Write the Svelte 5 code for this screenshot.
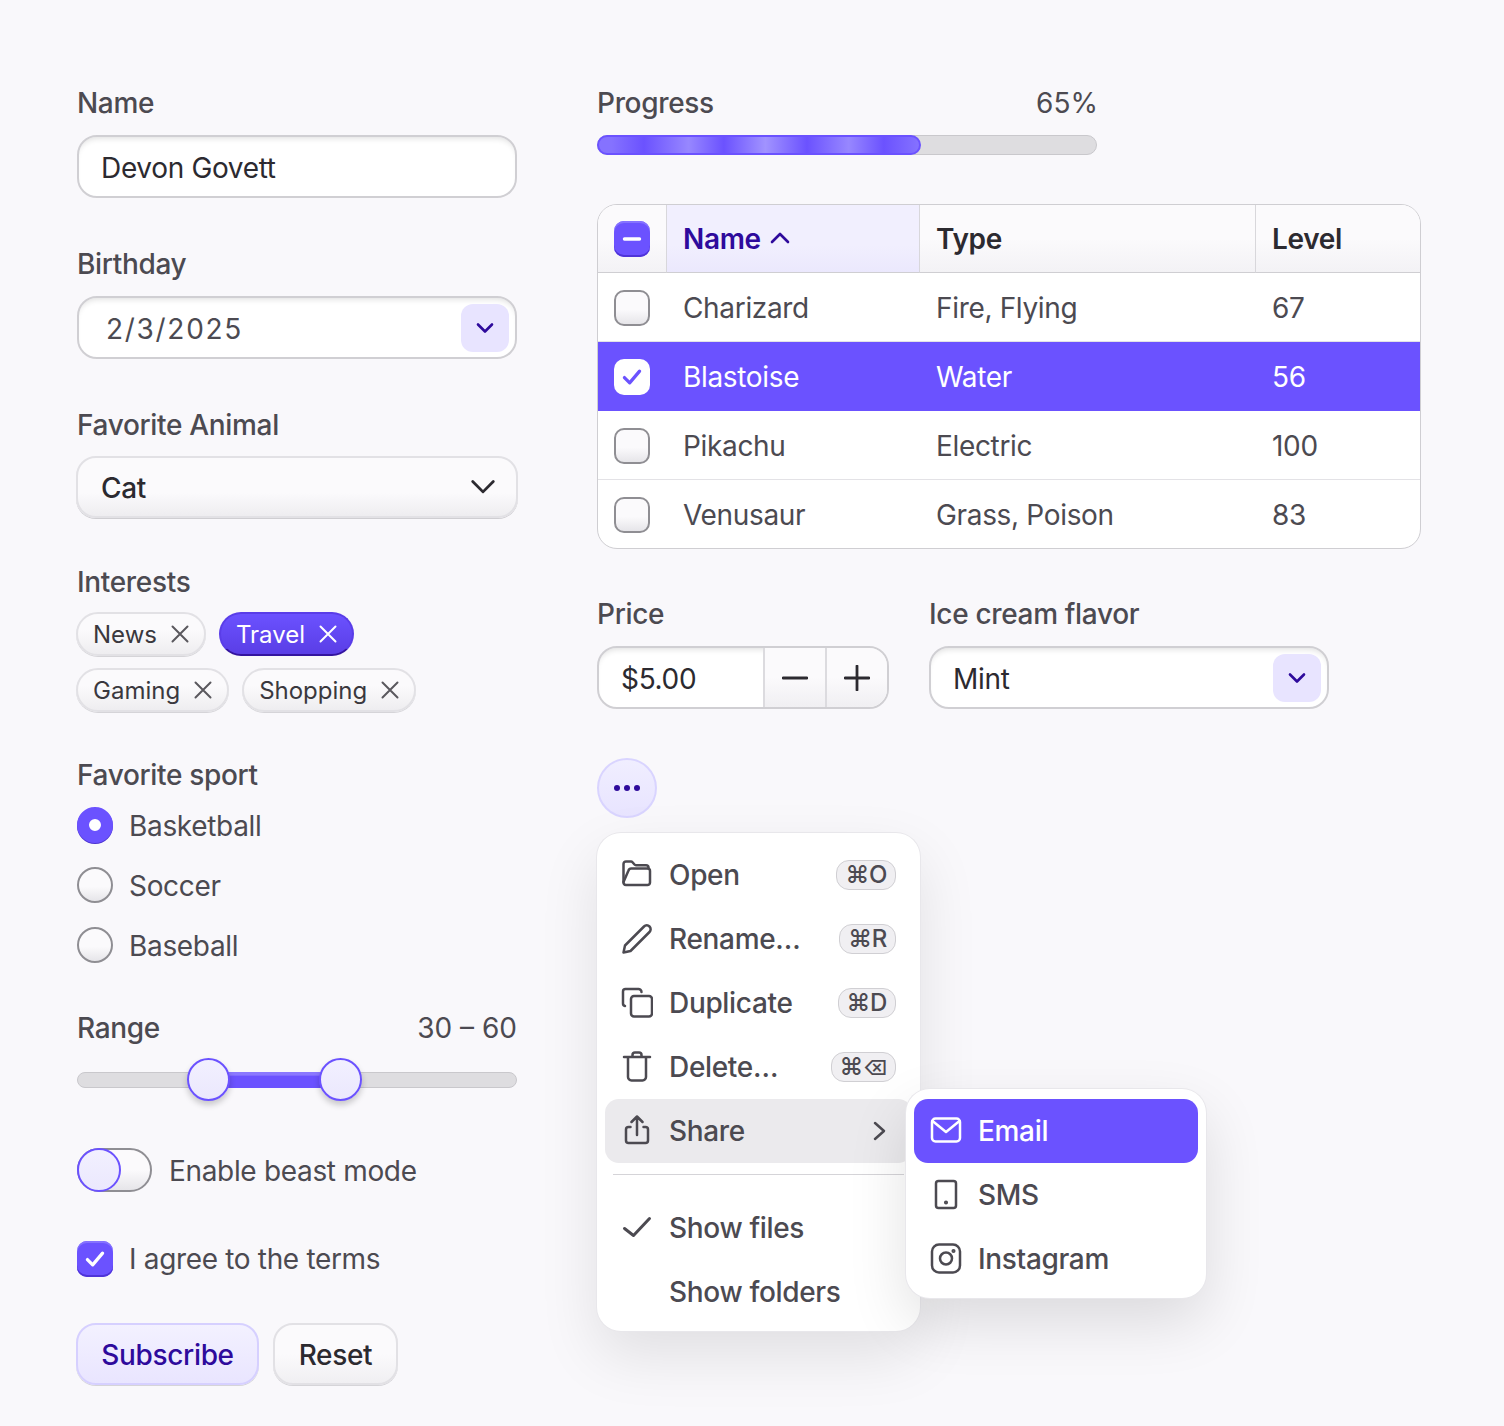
<script>
  const tags = [
    [{ name: "News" }, { name: "Travel", on: true }],
    [{ name: "Gaming" }, { name: "Shopping" }],
  ];
  const sports = ["Basketball", "Soccer", "Baseball"];
  const pokemon = [
    { name: "Charizard", type: "Fire, Flying", level: 67 },
    { name: "Blastoise", type: "Water", level: 56, on: true },
    { name: "Pikachu", type: "Electric", level: 100 },
    { name: "Venusaur", type: "Grass, Poison", level: 83 },
  ];
  const range = [30, 60];
  const progress = 65;
</script>

{#snippet chevron()}
  <svg class="chev" viewBox="0 0 24 24"><path d="M5 8.5l7 7 7-7" /></svg>
{/snippet}

{#snippet check()}
  <svg viewBox="0 0 24 24"><path d="M5.5 12.5l4.5 4.5 8.5-10" /></svg>
{/snippet}

<div class="page">
  <div class="col">
    <div class="label">Name</div>
    <div class="field"><span class="t">Devon Govett</span></div>

    <div class="label next">Birthday</div>
    <div class="field picker">
      <span class="date t">2/3/2025</span>
      <span class="drop">{@render chevron()}</span>
    </div>

    <div class="label next">Favorite Animal</div>
    <div class="select"><span class="t">Cat</span> <svg class="chev dark" viewBox="0 0 24 24"><path d="M2.500 7l9.500 9.500L21.500 7" /></svg></div>

    <div class="label interests">Interests</div>
    <div class="tags">
      {#each tags as row}
        <div class="tag-row">
          {#each row as t}
            <span class="tag" class:on={t.on}>
              {t.name}
              <svg viewBox="0 0 18 18"><path d="M1.5 1.5l15 15M16.5 1.5l-15 15" /></svg>
            </span>
          {/each}
        </div>
      {/each}
    </div>

    <div class="label sport">Favorite sport</div>
    <div class="radios">
      {#each sports as s, i}
        <div class="radio-row"><span class="radio" class:on={i === 0}></span><span class="t">{s}</span></div>
      {/each}
    </div>

    <div class="label-row range-label">
      <span class="label">Range</span>
      <span class="value">30 – 60</span>
    </div>
    <div class="slider">
      <div class="track">
        <div class="fill" style="left:{range[0]}%;width:{range[1] - range[0]}%"></div>
      </div>
      {#each range as v}
        <span class="thumb" style="left:{v}%"></span>
      {/each}
    </div>

    <div class="switch-row">
      <span class="switch"><span class="knob"></span></span>
      <span class="t">Enable beast mode</span>
    </div>

    <div class="check-row">
      <span class="box on">{@render check()}</span>
      I agree to the terms
    </div>

    <div class="actions">
      <button class="btn primary">Subscribe</button>
      <button class="btn">Reset</button>
    </div>
  </div>

  <div class="col right">
    <div class="label-row progress-row">
      <span class="label">Progress</span>
      <span class="value">{progress}%</span>
    </div>
    <div class="progress"><div class="bar" style="width:{progress}%"></div></div>

    <div class="table-wrap">
      <table>
        <thead>
          <tr>
            <th class="c0"><span class="box on">
              <svg viewBox="0 0 24 24"><path d="M5.5 12h13" /></svg>
            </span></th>
            <th class="c1 sorted">Name <svg viewBox="0 0 24 24"><path d="M4 16l8-8 8 8" /></svg></th>
            <th class="c2">Type</th>
            <th>Level</th>
          </tr>
        </thead>
        <tbody>
          {#each pokemon as p}
            <tr class:on={p.on}>
              <td><span class="box" class:inv={p.on}>{#if p.on}{@render check()}{/if}</span></td>
              <td><span class="t">{p.name}</span></td>
              <td><span class="t">{p.type}</span></td>
              <td><span class="t">{p.level}</span></td>
            </tr>
          {/each}
        </tbody>
      </table>
    </div>

    <div class="form-row">
      <div>
        <div class="label">Price</div>
        <div class="number">
          <span class="num-val">$5.00</span>
          <span class="step"><svg viewBox="0 0 26 26"><path d="M1 13h24" /></svg></span>
          <span class="step"><svg viewBox="0 0 26 26"><path d="M1 13h24M13 1v24" /></svg></span>
        </div>
      </div>
      <div>
        <div class="label">Ice cream flavor</div>
        <div class="field picker flavor">
          <span class="t">Mint</span>
          <span class="drop">{@render chevron()}</span>
        </div>
      </div>
    </div>

    <button class="more" aria-label="More">
      <svg viewBox="0 0 28 8"><circle cx="4" cy="4" r="3" /><circle cx="14" cy="4" r="3" /><circle cx="24" cy="4" r="3" /></svg>
    </button>

    <div class="menu">
      <div class="item">
        <svg class="ic" viewBox="0 0 32 32"><path d="M2.500 23V5A2.500 2.500 0 0 1 5 2.500h5a2 2 0 0 1 1.500.7l2 2.300a2 2 0 0 0 1.500.7h10a2.500 2.500 0 0 1 2.500 2.500V9.500" /><path d="M2.500 23a2.500 2.500 0 0 0 2.500 3h21.500a2.500 2.500 0 0 0 2.500-2.500V12a2.500 2.500 0 0 0-2.500-2.500H10.500a3 3 0 0 0-3 2z" /></svg>
        <span class="text">Open</span><kbd>⌘O</kbd>
      </div>
      <div class="item">
        <svg class="ic" viewBox="0 0 32 32"><path d="M2.500 29.500l1.500-7L23 3.500a3.500 3.500 0 0 1 5.500 5.500L9.500 28z" /></svg>
        <span class="text">Rename…</span><kbd>⌘R</kbd>
      </div>
      <div class="item">
        <svg class="ic" viewBox="0 0 32 32"><rect x="10" y="9" width="21" height="20.500" rx="3" /><path d="M4 19a2.500 2.500 0 0 1-2-2.500V4.500A2.500 2.500 0 0 1 4.500 2H17a3 3 0 0 1 3.500 3" /></svg>
        <span class="text">Duplicate</span><kbd>⌘D</kbd>
      </div>
      <div class="item">
        <svg class="ic" viewBox="0 0 32 32"><path d="M3 6h26M7 6v20a3.500 3.500 0 0 0 3.500 3.500h11A3.500 3.500 0 0 0 25 26V6M11.500 6V4a2.500 2.500 0 0 1 2.500-2.500h4A2.500 2.500 0 0 1 20.500 4v2" /></svg>
        <span class="text">Delete…</span><kbd>⌘<span class="bs">⌫</span></kbd>
      </div>
      <div class="item active">
        <svg class="ic" viewBox="0 0 32 32"><path d="M16 20V1.500M10.500 7L16 1.500 21.500 7M9.500 12H7.500A2.500 2.500 0 0 0 5 14.500V25.500A2.500 2.500 0 0 0 7.500 28h17a2.500 2.500 0 0 0 2.500-2.500V14.500A2.500 2.500 0 0 0 24.500 12H22.500" /></svg>
        <span class="text">Share</span>
        <svg class="arrow" viewBox="0 0 14 20"><path d="M2 2l9 8-9 8" /></svg>
      </div>
      <div class="sep"></div>
      <div class="item">
        <svg class="ic heavy" viewBox="0 0 32 32"><path d="M3.500 16.500l9 7L28.500 6.500" /></svg>
        <span class="text">Show files</span>
      </div>
      <div class="item">
        <span class="ic"></span>
        <span class="text">Show folders</span>
      </div>

      <div class="submenu">
        <div class="item hi">
          <svg class="ic" viewBox="0 0 32 32"><rect x="2" y="3.500" width="28" height="23" rx="3.500" /><path d="M2.500 6l13.500 11L29.500 6" /></svg>
          <span class="text">Email</span>
        </div>
        <div class="item">
          <svg class="ic" viewBox="0 0 32 32"><rect x="6" y="2" width="20" height="27" rx="2.500" /><circle class="dot" cx="16" cy="23.500" r="0.800" /></svg>
          <span class="text">SMS</span>
        </div>
        <div class="item">
          <svg class="ic" viewBox="0 0 32 32"><rect x="2" y="1.500" width="28" height="28" rx="7" /><circle cx="16" cy="15.500" r="6" /><circle class="dot" cx="23.500" cy="8" r="0.800" /></svg>
          <span class="text">Instagram</span>
        </div>
      </div>
    </div>
  </div>
</div>

<style>
  :global(body) {
    background: #f9f8fb;
    font-family: Inter, "Liberation Sans", sans-serif;
    font-size: 28px;
    letter-spacing: -0.33px;
    color: #2c2a30;
  }
  svg {
    fill: none;
    stroke: currentColor;
    stroke-linecap: round;
    stroke-linejoin: round;
  }
  .t { padding-top: 2px; }
  .page {
    display: grid;
    grid-template-columns: 440px 824px;
    gap: 80px;
    padding: 86px 0 0 77px;
    min-height: 1340px;
  }
  .col {
    display: flex;
    flex-direction: column;
    min-width: 0;
  }
  .label {
    height: 34px;
    line-height: 34px;
    font-weight: 500;
    color: #4c4a51;
    margin-bottom: 15px;
  }
  .label.next { margin-top: 49px; }
  .label-row {
    display: flex;
    justify-content: space-between;
    height: 34px;
  }
  .label-row .label { margin: 0; }
  .value {
    line-height: 34px;
    color: #4c4a51;
    letter-spacing: 0;
  }

  .field {
    height: 63px;
    box-sizing: border-box;
    border: 2px solid #d0cfd3;
    border-radius: 20px;
    background: #fff;
    box-shadow: inset 0 5px 6px -4px rgba(0, 0, 0, 0.14);
    padding: 0 22px;
    display: flex;
    align-items: center;
    justify-content: space-between;
  }
  .picker { padding-right: 6px; }
  .date {
    color: #4c4a51;
    padding-left: 5px;
    letter-spacing: 1.7px;
  }
  .drop {
    width: 48px;
    height: 48px;
    border-radius: 12px;
    background: #e8e4ff;
    color: #2e0a9c;
    display: flex;
    align-items: center;
    justify-content: center;
  }
  .chev {
    width: 24px;
    height: 24px;
    stroke-width: 2.6;
  }
  .select {
    margin: -1px -1px 0 -1px;
    height: 62px;
    box-sizing: border-box;
    border: 2px solid #e2e1e5;
    border-radius: 20px;
    background: linear-gradient(#fbfafc 60%, #eeedf0);
    box-shadow: 0 1px 0 #cfced2;
    padding: 0 20px 0 23px;
    display: flex;
    align-items: center;
    justify-content: space-between;
    font-weight: 500;
  }
  .dark { width: 26px; height: 26px; }

  .interests { margin: 47px 0 13px; }
  .tags {
    display: flex;
    flex-direction: column;
    gap: 12px;
    margin-left: -1px;
  }
  .tag-row {
    display: flex;
    gap: 13px;
  }
  .tag {
    height: 44px;
    box-sizing: border-box;
    border: 2px solid #e2e1e5;
    border-radius: 22px;
    background: linear-gradient(#fbfafc 40%, #eeedf0);
    box-shadow: 0 1px 0 #d5d4d8;
    padding: 0 15px;
    display: flex;
    align-items: center;
    gap: 14px;
    font-size: 24px;
    letter-spacing: 0;
    color: #3a383e;
  }
  .tag svg {
    width: 18px;
    height: 18px;
    stroke-width: 2;
    color: #5a585e;
  }
  .tag.on {
    border-color: #5a3de8 #5a3de8 #34149f;
    background: linear-gradient(#6b52ff, #5a3ee6);
    color: #fff;
    box-shadow: none;
  }
  .tag.on svg { color: #fff; }

  .sport { margin: 46px 0 3px; }
  .radio-row {
    height: 60px;
    display: flex;
    align-items: center;
    gap: 16px;
    color: #4c4a51;
  }
  .radio {
    width: 36px;
    height: 36px;
    box-sizing: border-box;
    border: 2px solid #8f8e93;
    border-radius: 50%;
    background: linear-gradient(#fbfafc 55%, #e6e5e9);
  }
  .radio.on {
    border: 12px solid #6b52ff;
    background: #fff;
    box-shadow: 0 1px 0 #4a30d0;
  }

  .range-label { margin-top: 36px; }
  .slider {
    position: relative;
    height: 42px;
    margin-top: 14px;
    display: flex;
    align-items: center;
  }
  .track {
    position: relative;
    width: 100%;
    height: 16px;
    box-sizing: border-box;
    border: 1px solid #c9c8cc;
    border-radius: 8px;
    background: #dedde0;
  }
  .fill {
    position: absolute;
    top: -1px;
    bottom: -1px;
    background: linear-gradient(#8b78ff 20%, #6b52ff 25%);
  }
  .thumb {
    position: absolute;
    top: -1px;
    width: 43px;
    height: 43px;
    margin-left: -22px;
    box-sizing: border-box;
    border: 2px solid #6b52ff;
    border-radius: 50%;
    background: linear-gradient(#f2f0ff, #ebe8fd);
    box-shadow: 0 4px 6px rgba(0, 0, 0, 0.2);
  }

  .switch-row {
    margin-top: 47px;
    display: flex;
    align-items: center;
    gap: 17px;
    color: #4c4a51;
  }
  .switch {
    width: 75px;
    height: 44px;
    box-sizing: border-box;
    border: 2px solid #8f8e93;
    border-radius: 22px;
    background: linear-gradient(#fbfafc 50%, #e6e5e9);
    display: flex;
    align-items: center;
  }
  .knob {
    margin-left: -2px;
    width: 44px;
    height: 44px;
    box-sizing: border-box;
    border: 2px solid #6b52ff;
    border-radius: 50%;
    background: linear-gradient(#f2f0ff, #ebe8fd);
  }

  .check-row {
    margin-top: 49px;
    height: 36px;
    display: flex;
    align-items: center;
    gap: 16px;
    color: #4c4a51;
  }
  .box {
    width: 36px;
    height: 36px;
    box-sizing: border-box;
    border: 2px solid #8f8e93;
    border-radius: 10px;
    background: linear-gradient(#fbfafc 55%, #e6e5e9);
    display: inline-flex;
    align-items: center;
    justify-content: center;
    vertical-align: middle;
  }
  .box svg {
    width: 28px;
    height: 28px;
    stroke-width: 2.8;
  }
  .box.on {
    border: 0;
    background: #6b52ff;
    color: #fff;
    box-shadow: inset 0 2px 0 #8572ff, inset 0 -2px 0 #4f34d8;
  }
  .box.inv {
    border: 0;
    background: #fff;
    color: #6b52ff;
  }

  .actions {
    margin: 46px 0 0 -1px;
    display: flex;
    gap: 14px;
  }
  .btn {
    width: 183px;
    height: 62px;
    box-sizing: border-box;
    border: 2px solid #e2e1e5;
    border-radius: 20px;
    background: linear-gradient(#fbfafc 50%, #f0eff2);
    box-shadow: 0 1px 0 #d5d4d8;
    padding: 2px 0 0;
    font: 500 28px Inter, "Liberation Sans", sans-serif;
    letter-spacing: inherit;
    color: #2c2a30;
  }
  .btn:not(.primary) { width: 125px; }
  .btn.primary {
    border-color: #d6d0ff;
    background: linear-gradient(#f3f1ff, #e9e5ff);
    color: #2e0a9c;
  }

  .progress-row { margin-bottom: 15px; width: 501px; }
  .progress {
    width: 500px;
    height: 20px;
    box-sizing: border-box;
    border: 1px solid #c9c8cc;
    border-radius: 10px;
    background: #dedde0;
  }
  .bar {
    height: 20px;
    margin: -1px;
    box-sizing: border-box;
    border: 2px solid #6b52ff;
    border-radius: 10px;
    background: linear-gradient(90deg, #8572ff 4%, #6b52ff 14%, #9787ff 28%, #6b52ff 39%, #a193ff 52%, #6b52ff 65%, #9787ff 78%, #6b52ff 89%, #8572ff);
  }

  .table-wrap {
    margin-top: 49px;
    border: 1px solid #cfced2;
    border-radius: 20px;
    overflow: hidden;
    background: #fff;
  }
  table {
    width: 100%;
    border-collapse: separate;
    border-spacing: 0;
    table-layout: fixed;
  }
  th {
    height: 67px;
    padding: 0 0 0 16px;
    text-align: left;
    font-weight: 600;
    border-bottom: 1px solid #cfced2;
    background: linear-gradient(#fbfafc 50%, #f3f2f5);
    box-sizing: content-box;
  }
  th.c0 { width: 52px; border-right: 1px solid #d8d7db; }
  th.c1 { width: 236px; border-right: 1px solid #d8d7db; }
  th.c2 { width: 319px; border-right: 1px solid #d8d7db; }
  th.sorted {
    background: linear-gradient(#f1effe 60%, #ebe8fd);
    color: #2e0a9c;
  }
  th.sorted svg {
    width: 24px;
    height: 24px;
    stroke-width: 2.6;
    vertical-align: -1px;
  }
  td {
    height: 68px;
    padding: 0 0 0 16px;
    border-bottom: 1px solid #e3e2e6;
    color: #4c4a51;
  }
  td .t {
    position: relative;
    top: 1px;
    padding: 0;
  }
  tr:last-child td {
    border-bottom: 0;
  }
  tr.on td {
    background: #6b52ff;
    color: #fff;
    border-bottom-color: #6b52ff;
  }

  .form-row {
    margin-top: 48px;
    display: flex;
    gap: 40px;
  }
  .number {
    width: 292px;
    height: 63px;
    box-sizing: border-box;
    border: 2px solid #d0cfd3;
    border-radius: 20px;
    background: #fff;
    box-shadow: inset 0 5px 6px -4px rgba(0, 0, 0, 0.14);
    display: flex;
    overflow: hidden;
  }
  .num-val {
    width: 165px;
    padding: 3px 0 0 22px;
    box-sizing: border-box;
    line-height: 56px;
  }
  .step {
    width: 62px;
    border-left: 2px solid #dcdbdf;
    box-sizing: border-box;
    background: linear-gradient(#fbfafc 50%, #f0eff2);
    display: flex;
    align-items: center;
    justify-content: center;
  }
  .step svg {
    width: 26px;
    height: 26px;
    stroke-width: 2.8;
  }
  .flavor {
    width: 400px;
  }

  .more {
    margin-top: 49px;
    width: 60px;
    height: 60px;
    padding: 0;
    border: 2px solid #d9d4ff;
    border-radius: 50%;
    background: linear-gradient(#f0eeff, #e8e4ff);
    color: #2e0a9c;
    display: flex;
    align-items: center;
    justify-content: center;
  }
  .more svg {
    width: 28px;
    height: 8px;
    fill: currentColor;
    stroke: none;
  }

  .menu {
    position: relative;
    margin-top: 15px;
    width: 323px;
    box-sizing: border-box;
    padding: 10px 8px 7px;
    border-radius: 24px;
    background: #fff;
    box-shadow: 0 0 0 1px #e8e7eb, 0 24px 60px rgba(0, 0, 0, 0.1);
  }
  .item {
    height: 64px;
    box-sizing: border-box;
    padding: 0 16px;
    border-radius: 14px;
    display: flex;
    align-items: center;
    font-weight: 500;
    color: #4c4a51;
  }
  .ic {
    flex: none;
    width: 32px;
    height: 32px;
    stroke-width: 2.5;
    margin-right: 16px;
  }
  .heavy { stroke-width: 3; }
  .dot { fill: currentColor; }
  .text { flex: 1; }
  kbd {
    height: 30px;
    box-sizing: border-box;
    border: 1px solid #d0cfd3;
    border-radius: 13px;
    background: #f0eff2;
    padding: 0 8px;
    font: 500 24px/28px Inter, "DejaVu Sans", sans-serif;
    color: #4c4a51;
  }
  .bs { font-size: 20px; }
  .active { background: #ebeaed; }
  .arrow {
    width: 14px;
    height: 20px;
    stroke-width: 2.5;
    margin-right: 9px;
  }
  .sep {
    height: 1px;
    margin: 11px 8px 21px;
    background: #d5d4d8;
  }
  .submenu {
    position: absolute;
    left: 309px;
    top: 256px;
    width: 300px;
    box-sizing: border-box;
    padding: 10px 8px 7px;
    border-radius: 24px;
    background: #fff;
    box-shadow: 0 0 0 1px #e8e7eb, 0 24px 60px rgba(0, 0, 0, 0.12);
  }
  .hi {
    background: #6b52ff;
    color: #fff;
  }
</style>
